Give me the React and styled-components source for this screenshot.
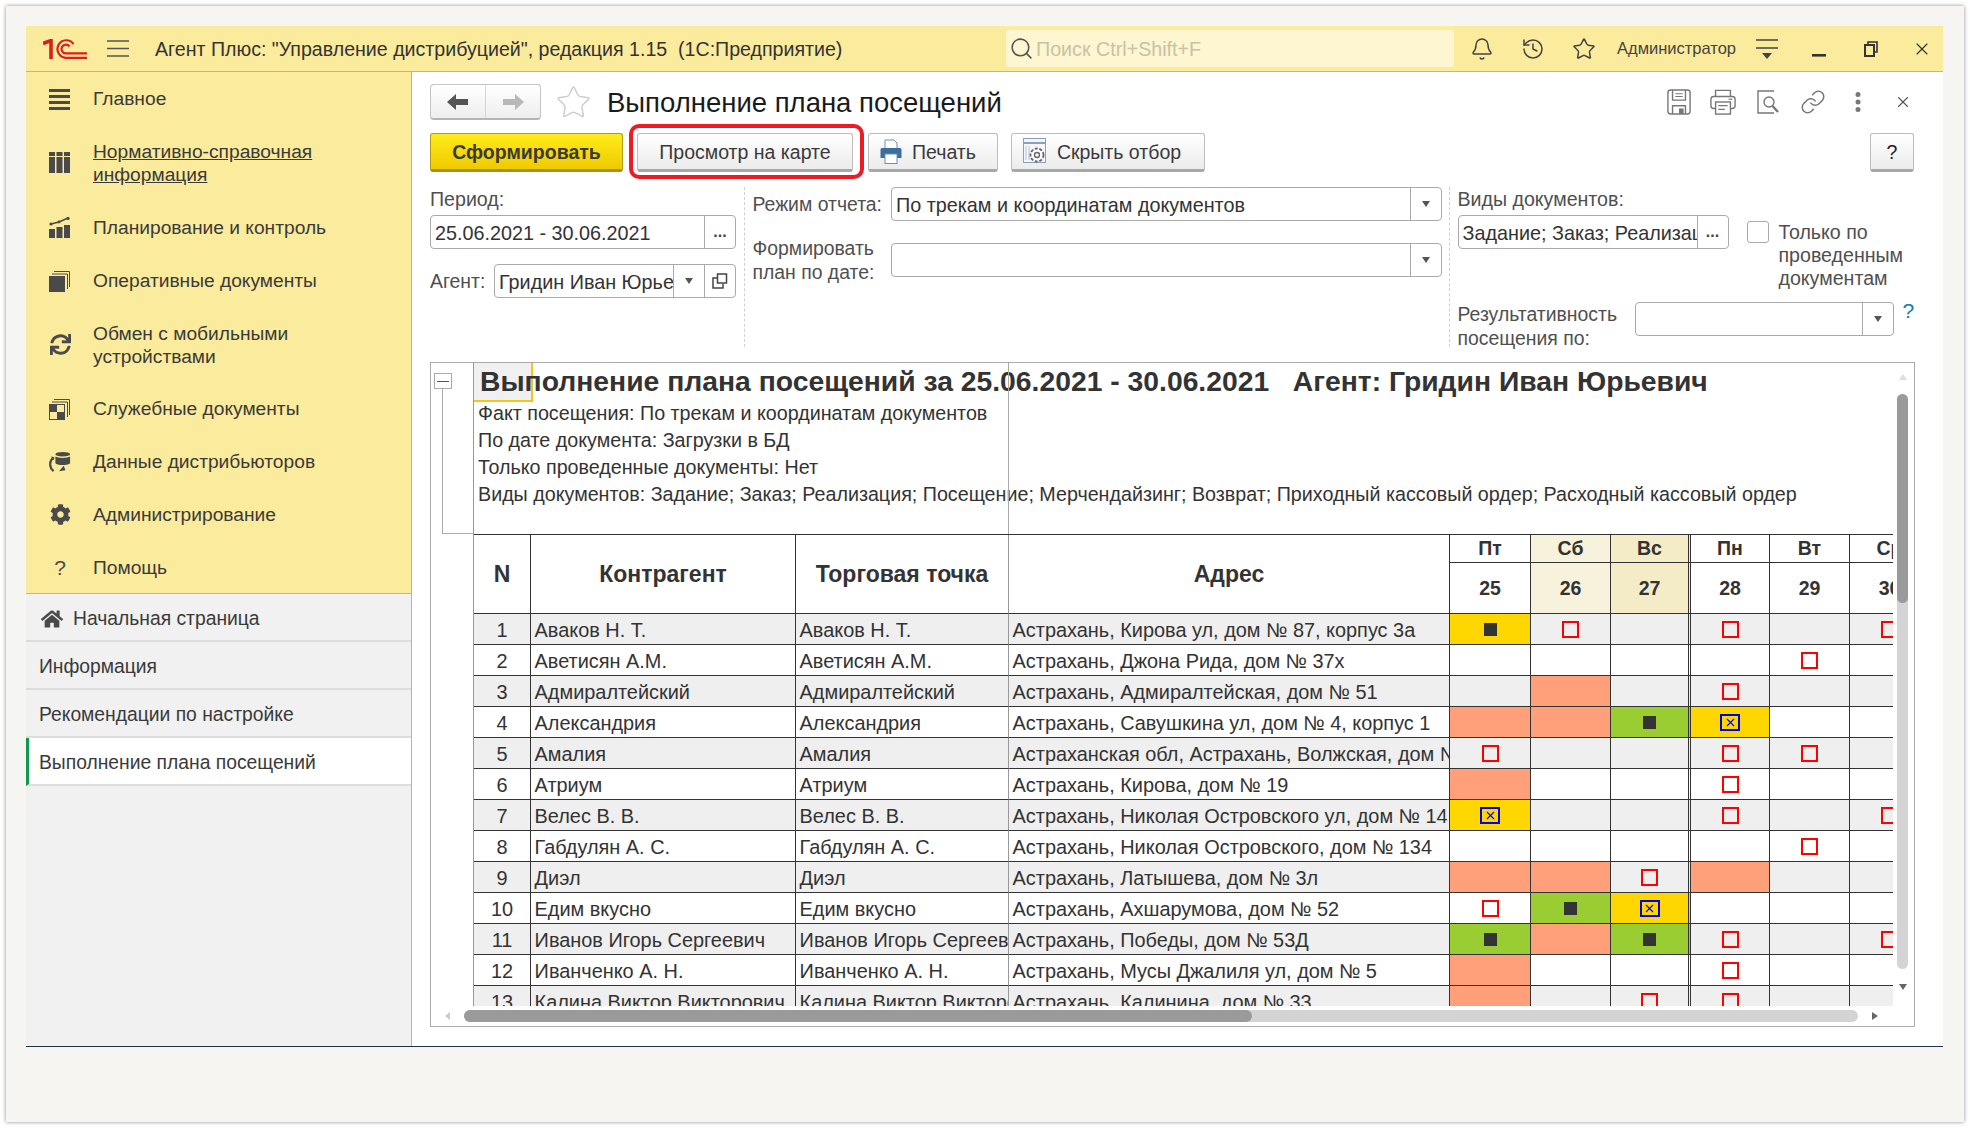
import React from 'react';
import styled, { createGlobalStyle } from 'styled-components';
import { Bell, History, Star, Search, Link, X } from 'lucide-react';
import { FaCog, FaSync, FaHome } from 'react-icons/fa';

const GlobalStyle = createGlobalStyle`
    html, body {
        margin: 0;
        padding: 0;
        background: #ffffff;
    }
    * {
        box-sizing: border-box;
    }
    body {
        font-family: "Liberation Sans", Arial, sans-serif;
        color: #333333;
    }
`;

const COLS = '57px 265px 213px 441px 81px 80px 80px 79px 80px 80px';

const Page = styled.div`
    width: 1970px;
    height: 1128px;
    padding: 6px;
    overflow: hidden;
`;

const Paper = styled.div`
    width: 1958px;
    height: 1116px;
    padding: 20px 21px 0 20px;
    background: #f6f5f2;
    box-shadow: 0 0 4px rgba(0, 0, 0, .45);
`;

const AppWindow = styled.div`
    height: 1021px;
    display: flex;
    flex-direction: column;
    border-bottom: 1px solid #1e3346;
    background: #ffffff;
`;

const Header = styled.header`
    height: 46px;
    flex: none;
    display: flex;
    align-items: center;
    background: #fbeb9c;
    border-bottom: 1px solid #c9b76a;
    padding: 0 11px 0 17px;
    > * {
        flex: none;
    }
`;

const LogoBox = styled.div`
    width: 44px;
    height: 20px;
    margin-right: 20px;
    display: flex;
`;

const MenuBox = styled.div`
    width: 22px;
    margin-right: 26px;
    display: flex;
`;

const AppTitle = styled.div`
    width: 851px;
    padding-top: 1px;
    font-size: 19.6px;
    color: #333;
    white-space: pre;
`;

const SearchBox = styled.div`
    width: 448px;
    height: 37px;
    display: flex;
    align-items: center;
    gap: 2px;
    padding-left: 3px;
    background: #fdf6d0;
    border-radius: 3px;
    color: #c8c3a6;
    font-size: 19.7px;
    line-height: 24px;
    svg {
        color: #555;
    }
`;

const HeaderIcons = styled.div`
    display: flex;
    align-items: center;
    margin-left: 16px;
    gap: 27px;
    svg {
        color: #444;
    }
`;

const UserName = styled.div`
    margin-left: 21px;
    font-size: 16.5px;
    color: #444;
    width: 139px;
    white-space: nowrap;
`;

const WindowIcons = styled.div`
    display: flex;
    align-items: center;
    gap: 34px;
    svg {
        display: block;
    }
`;

const Body = styled.div`
    flex: 1;
    display: flex;
    min-height: 0;
`;

const Sidebar = styled.nav`
    width: 386px;
    flex: none;
    display: flex;
    flex-direction: column;
    background: #f1f1f1;
    border-right: 1px solid #c9b76a;
`;

const Sections = styled.div`
    background: #fbeb9c;
    border-bottom: 1px solid #c9b76a;
    height: 522px;
    flex: none;
`;

const Section = styled.div`
    display: flex;
    align-items: center;
    height: ${p => p.$h}px;
    padding-left: 23px;
    color: #3a3a3a;
    font-size: 19.2px;
    line-height: 23px;
`;

const SectionIcon = styled.div`
    width: 22px;
    height: 22px;
    margin-right: 22px;
    flex: none;
    display: flex;
    align-items: center;
    justify-content: center;
    color: #4a4a4a;
    font-size: 21px;
`;

const SectionText = styled.span`
    text-decoration: ${p => (p.$underline ? 'underline' : 'none')};
`;

const Tab = styled.div`
    height: 48px;
    flex: none;
    display: flex;
    align-items: center;
    gap: 10px;
    padding: 3px 0 0 ${p => (p.$home ? 15 : p.$active ? 10 : 13)}px;
    border-bottom: 2px solid #dddddd;
    border-left: ${p => (p.$active ? '3px solid #0e9a4a' : '0 none')};
    background: ${p => (p.$active ? '#ffffff' : 'transparent')};
    font-size: 19.3px;
    color: #3a3a3a;
    svg {
        color: #4a4a4a;
    }
`;

const Content = styled.main`
    flex: 1;
    min-width: 0;
    padding: 12px 28px 0 18px;
    display: flex;
    flex-direction: column;
`;

const TitleBar = styled.div`
    height: 36px;
    flex: none;
    display: flex;
    align-items: center;
`;

const NavGroup = styled.div`
    width: 111px;
    height: 36px;
    display: flex;
    border: 1px solid #c4c4c4;
    border-bottom: 2px solid #b5b5b5;
    border-radius: 4px;
    background: linear-gradient(#ffffff, #eeeeee);
`;

const NavButton = styled.div`
    flex: 1;
    display: flex;
    align-items: center;
    justify-content: center;
    & + & {
        border-left: 1px solid #d4d4d4;
    }
`;

const FavStar = styled.div`
    margin: 0 15px 0 14px;
    display: flex;
    svg {
        color: #cfcfcf;
    }
`;

const PageTitle = styled.h1`
    margin: 0;
    padding-top: 2px;
    font-size: 27.5px;
    font-weight: 400;
    color: #1a1a1a;
    white-space: nowrap;
`;

const FormActions = styled.div`
    margin-left: auto;
    margin-right: -10px;
    display: flex;
    align-items: center;
    svg {
        color: #777777;
        display: block;
    }
`;

const FormAction = styled.div`
    width: 44.8px;
    display: flex;
    justify-content: center;
`;

const Toolbar = styled.div`
    margin-top: 13px;
    height: 39px;
    flex: none;
    display: flex;
    align-items: stretch;
`;

const Button = styled.div`
    width: ${p => p.$w}px;
    margin-left: ${p => p.$gap || 0}px;
    padding: 1px ${p => p.$padRight || 0}px 0 0;
    display: flex;
    align-items: center;
    justify-content: center;
    gap: 10px;
    font-size: 19.5px;
    color: #3a3a3a;
    border: 1px solid #bdbdbd;
    border-bottom: 3px solid #a8a8a8;
    border-radius: 3px;
    background: linear-gradient(#ffffff, #ececec);
`;

const PrimaryButton = styled(Button)`
    font-weight: 700;
    border: 1px solid #ad9a1c;
    border-bottom: 3px solid #a6921b;
    background: linear-gradient(#ffec1a, #efca00);
`;

const Highlighted = styled(Button)`
    position: relative;
    &::after {
        content: "";
        position: absolute;
        top: -10px;
        bottom: -10px;
        left: -9px;
        right: -12px;
        border: 4px solid #ed1c24;
        border-radius: 10px;
    }
`;

const HelpButton = styled(Button)`
    margin-left: auto;
    margin-right: 1px;
    color: #222;
`;

const FilterForm = styled.div`
    margin-top: 15px;
    height: 160px;
    flex: none;
    display: flex;
`;

const FilterColumn = styled.div`
    width: ${p => p.$w}px;
    flex: none;
    padding-right: ${p => p.$padRight || 0}px;
    ${p => (p.$dashed ? 'border-left: 1px dashed #d0d0d0; padding-left: 7.5px;' : '')}
    ${p => (p.$gapRight ? `margin-right: ${p.$gapRight}px;` : '')}
`;

const TopLabel = styled.div`
    height: 24px;
    line-height: 24px;
    margin-bottom: 4px;
    font-size: 19.6px;
    color: #4f4f4f;
`;

const Field = styled.div`
    height: 34px;
    width: ${p => (p.$w ? `${p.$w}px` : 'auto')};
    flex: ${p => (p.$w ? 'none' : '1')};
    min-width: 0;
    align-self: ${p => (p.$top ? 'flex-start' : 'auto')};
    display: flex;
    align-items: stretch;
    border: 1px solid #aaaaaa;
    border-radius: 4px;
    background: #fff;
`;

const FieldValue = styled.div`
    flex: 1;
    min-width: 0;
    padding-left: 4px;
    padding-right: 3px;
    font-size: 19.8px;
    line-height: 34px;
    color: #333;
    white-space: nowrap;
    overflow: hidden;
`;

const FieldButton = styled.div`
    width: 31px;
    flex: none;
    display: flex;
    align-items: center;
    justify-content: center;
    border-left: 1px solid #aaaaaa;
    color: #444;
    font-weight: 700;
    font-size: 16px;
`;

const Caret = styled.span`
    width: 0;
    height: 0;
    border-left: 4px solid transparent;
    border-right: 4px solid transparent;
    border-top: 6px solid #555;
`;

const InlineRow = styled.div`
    display: flex;
    align-items: center;
    margin-top: ${p => p.$top || 0}px;
    gap: ${p => p.$gap || 0}px;
    width: 100%;
`;

const SideLabel = styled.div`
    width: ${p => p.$w}px;
    flex: none;
    font-size: 19.4px;
    line-height: 24px;
    color: #4f4f4f;
`;

const DocsRow = styled.div`
    height: 115px;
    display: flex;
`;

const DocsField = styled.div`
    width: 271px;
    flex: none;
`;

const CheckOption = styled.div`
    margin: 34px 0 0 18px;
    display: flex;
    gap: 10px;
`;

const CheckBox = styled.div`
    width: 22px;
    height: 22px;
    flex: none;
    border: 1px solid #aaaaaa;
    border-radius: 3px;
    background: #fff;
`;

const CheckText = styled.div`
    font-size: 19.6px;
    line-height: 23px;
    color: #4f4f4f;
`;

const HelpMark = styled.div`
    align-self: flex-start;
    margin: -3px 0 0 9px;
    font-size: 21px;
    color: #1677b8;
`;

const Report = styled.section`
    margin-top: 15px;
    width: 1485px;
    height: 665px;
    flex: none;
    display: flex;
    flex-direction: column;
    border: 1px solid #aaaaaa;
`;

const ReportMain = styled.div`
    height: 643px;
    flex: none;
    display: flex;
`;

const Gutter = styled.div`
    width: 42px;
    flex: none;
    padding: 10px 0 0 3px;
`;

const Collapse = styled.div`
    width: 18px;
    height: 16px;
    border: 1px solid #aaaaaa;
    display: flex;
    align-items: center;
    justify-content: center;
    &::before {
        content: "";
        width: 12px;
        height: 1px;
        background: #555;
    }
`;

const TreeLine = styled.div`
    margin-left: 8px;
    width: 31px;
    height: 145px;
    border-left: 1px solid #aaaaaa;
    border-bottom: 1px solid #aaaaaa;
`;

const Sheet = styled.div`
    width: 1420px;
    flex: none;
    overflow: hidden;
    border-left: 1px solid #999999;
`;

const ReportHead = styled.div`
    height: 172px;
    position: relative;
    border-bottom: 1px solid #333;
    &::after {
        content: "";
        position: absolute;
        top: 0;
        bottom: 0;
        left: 534px;
        width: 1px;
        background: #aaaaaa;
    }
`;

const TitleCell = styled.div`
    width: 59px;
    height: 39px;
    margin-bottom: -2px;
    padding-left: 6px;
    background: #f0f0f0;
    border-right: 2px solid #f5c518;
    border-bottom: 2px solid #f5c518;
    font-size: 28.3px;
    line-height: 37px;
    font-weight: 700;
    color: #333;
    white-space: pre;
`;

const ParamLine = styled.div`
    height: 27px;
    line-height: 27px;
    padding-left: 4px;
    font-size: 19.7px;
    color: #333;
    white-space: nowrap;
`;

const Grid = styled.div`
    width: 1456px;
    display: grid;
    grid-template-columns: ${COLS};
`;

const GridHead = styled(Grid)`
    grid-template-rows: 28px 51px;
`;

const HeadCell = styled.div`
    ${p => (p.$span ? 'grid-row: span 2;' : '')}
    display: flex;
    align-items: center;
    justify-content: center;
    border-right: ${p => (p.$double ? '3px double #333' : p.$light ? '1px solid #999' : '1px solid #333')};
    border-bottom: 1px solid #333;
    background: ${p => p.$bg || '#ffffff'};
    font-weight: 700;
    font-size: ${p => (p.$day ? 19.5 : 23)}px;
    color: #333;
`;

const Row = styled(Grid)`
    height: 31px;
    background: ${p => (p.$shaded ? '#efefef' : '#ffffff')};
`;

const TextCell = styled.div`
    padding-left: ${p => (p.$center ? 0 : 3.6)}px;
    text-align: ${p => (p.$center ? 'center' : 'left')};
    border-right: 1px solid ${p => (p.$light ? '#999' : '#333')};
    border-bottom: 1px solid #333;
    font-size: 19.9px;
    line-height: 32px;
    color: #333;
    white-space: nowrap;
    overflow: hidden;
`;

const DayCell = styled.div`
    display: flex;
    align-items: center;
    justify-content: center;
    border-right: ${p => (p.$double ? '3px double #333' : '1px solid #333')};
    border-bottom: 1px solid #333;
    background: ${p => p.$bg || 'transparent'};
`;

const DoneMark = styled.span`
    width: 13px;
    height: 13px;
    background: #333;
`;

const PlanMark = styled.span`
    width: 17px;
    height: 17px;
    border: 2px solid #ff0000;
`;

const MissMark = styled.span`
    width: 20px;
    height: 17px;
    display: flex;
    align-items: center;
    justify-content: center;
    border: 2px solid #0000ff;
    color: #0000ff;
`;

const VScroll = styled.div`
    width: 21px;
    flex: none;
    padding-right: 2px;
    display: flex;
    flex-direction: column;
    align-items: center;
`;

const ScrollArrow = styled.div`
    width: 0;
    height: 0;
    ${p => p.$dir === 'up' && 'border-left: 4px solid transparent; border-right: 4px solid transparent; border-bottom: 6px solid #dddddd; margin-top: 11px;'}
    ${p => p.$dir === 'down' && 'border-left: 4px solid transparent; border-right: 4px solid transparent; border-top: 6px solid #666; margin-top: 15px;'}
    ${p => p.$dir === 'left' && 'border-top: 4px solid transparent; border-bottom: 4px solid transparent; border-right: 5px solid #cccccc; margin-left: 14px;'}
    ${p => p.$dir === 'right' && 'border-top: 4px solid transparent; border-bottom: 4px solid transparent; border-left: 6px solid #666; margin-left: 14px;'}
`;

const VTrack = styled.div`
    margin-top: 14px;
    width: 11px;
    height: 575px;
    border-radius: 6px;
    background: #d4d4d4;
`;

const VThumb = styled.div`
    height: 209px;
    border-radius: 6px;
    background: #9a9a9a;
`;

const HScroll = styled.div`
    height: 20px;
    flex: none;
    display: flex;
    align-items: center;
`;

const HTrack = styled.div`
    margin-left: 14px;
    width: 1394px;
    height: 12px;
    border-radius: 6px;
    background: #d4d4d4;
`;

const HThumb = styled.div`
    width: 788px;
    height: 12px;
    border-radius: 6px;
    background: #9a9a9a;
`;

function BarsIcon() {
    return (
        <svg width="22" height="22" viewBox="0 0 22 22" fill="currentColor">
            <rect x="0" y="1" width="21" height="3" />
            <rect x="0" y="7" width="21" height="3" />
            <rect x="0" y="13" width="21" height="3" />
            <rect x="0" y="19" width="21" height="3" />
        </svg>
    );
}

function ColumnsIcon() {
    return (
        <svg width="22" height="22" viewBox="0 0 22 22" fill="currentColor">
            <rect x="0" y="0" width="6" height="4" />
            <rect x="7.5" y="0" width="6" height="4" />
            <rect x="15" y="0" width="6" height="4" />
            <rect x="0" y="5" width="6" height="16" />
            <rect x="7.5" y="5" width="6" height="16" />
            <rect x="15" y="5" width="6" height="16" />
        </svg>
    );
}

function ChartIcon() {
    return (
        <svg width="22" height="22" viewBox="0 0 22 22" fill="currentColor">
            <rect x="0" y="12" width="6" height="9" />
            <rect x="7.5" y="10" width="6" height="11" />
            <rect x="15" y="8" width="6" height="13" />
            <path d="M2 7 L10 5 L19 1" fill="none" stroke="currentColor" strokeWidth="1.4" />
            <circle cx="2" cy="7" r="1.6" />
            <circle cx="10" cy="5" r="1.4" />
            <circle cx="19" cy="1.5" r="1.6" />
        </svg>
    );
}

function DocsIcon({ checker }) {
    return (
        <svg width="22" height="22" viewBox="0 0 22 22" fill="currentColor">
            <path d="M5 1.5 H20.5 V17" fill="none" stroke="currentColor" strokeWidth="1" />
            <path d="M3 4 H18.5 V19" fill="none" stroke="currentColor" strokeWidth="1" />
            <rect x="0" y="6" width="16" height="16" />
            {checker && <rect x="8" y="7" width="7" height="7" fill="#fbeb9c" />}
            {checker && <rect x="1" y="14" width="7" height="7" fill="#fbeb9c" />}
        </svg>
    );
}

function BarrelIcon() {
    return (
        <svg width="24" height="24" viewBox="0 0 24 24" fill="currentColor">
            <ellipse cx="15" cy="3.5" rx="8" ry="2.5" />
            <path d="M7 6 C10 8 20 8 23 6 V13 C22 16 8 16 7 13 Z" />
            <path d="M5 7 C0 11 0 18 5 22" fill="none" stroke="currentColor" strokeWidth="2.4" />
            <path d="M6 7 L2 6 L5 10 Z" />
            <path d="M11 22 L16 16 L18 21 Z" />
        </svg>
    );
}

function Logo() {
    return (
        <svg width="44" height="20" viewBox="0 0 44 20" fill="none" stroke="#d9201f" strokeWidth="2.2">
            <path d="M0 4.5 L8 1.5 V20" strokeWidth="3.6" />
            <path d="M30.5 5 A8.8 8.8 0 1 0 22.5 18.8 H44" />
            <path d="M26.5 7.5 A4.4 4.4 0 1 0 22.5 14.4 H44" />
        </svg>
    );
}

function Hamburger() {
    return (
        <svg width="22" height="18" viewBox="0 0 22 18" stroke="#555" strokeWidth="1.6">
            <path d="M0 1 H22 M0 8.5 H22 M0 16 H22" />
        </svg>
    );
}

function UserMenuIcon() {
    return (
        <svg width="22" height="22" viewBox="0 0 22 22">
            <path d="M0 2 H22 M0 10 H22" stroke="#444" strokeWidth="1.6" />
            <path d="M6 15 H16 L11 21 Z" fill="#444" />
        </svg>
    );
}

function MinimizeIcon() {
    return (
        <svg width="18" height="16" viewBox="0 0 18 16">
            <rect x="0" y="13" width="14" height="2.6" fill="#333" />
        </svg>
    );
}

function RestoreIcon() {
    return (
        <svg width="14" height="16" viewBox="0 0 14 16" fill="none" stroke="#333">
            <path d="M4 3 V1 H13 V11 H11" strokeWidth="1.6" />
            <rect x="1" y="4" width="9" height="11" strokeWidth="2" />
        </svg>
    );
}

function ArrowIcon({ flip, color }) {
    return (
        <svg width="22" height="16" viewBox="0 0 22 16">
            <path d="M0 8 L9 0 V5 H21 V11 H9 V16 Z" fill={color} transform={flip ? 'matrix(-1 0 0 1 22 0)' : undefined} />
        </svg>
    );
}

function SaveIcon() {
    return (
        <svg width="24" height="26" viewBox="0 0 26 28" fill="none" stroke="currentColor" strokeWidth="1.5">
            <rect x="1" y="1" width="24" height="26" rx="3" />
            <path d="M6 1 V12 H20 V1" />
            <path d="M9 5 H17 M9 8 H17" strokeWidth="1.2" />
            <path d="M6 27 V18 H20 V27" />
            <rect x="13" y="21" width="5" height="6" fill="currentColor" stroke="none" />
        </svg>
    );
}

function PrinterIcon() {
    return (
        <svg width="26" height="26" viewBox="0 0 28 28" fill="none" stroke="currentColor" strokeWidth="1.5">
            <path d="M6 8 V1.5 H22 V8" />
            <rect x="1" y="8" width="26" height="13" rx="3" />
            <rect x="6" y="14" width="16" height="13" fill="#fff" />
            <path d="M9 18 H19 M9 22 H16" strokeWidth="1.3" />
            <path d="M20 11 H24" strokeWidth="1.3" />
        </svg>
    );
}

function PreviewIcon() {
    return (
        <svg width="22" height="28" viewBox="0 0 22 28" fill="none" stroke="currentColor" strokeWidth="1.4">
            <path d="M17 3 H1 V25 H17" />
            <circle cx="12" cy="14" r="5" />
            <path d="M15.5 18 L21 24" strokeWidth="2.4" />
        </svg>
    );
}

function DotsIcon() {
    return (
        <svg width="8" height="22" viewBox="0 0 8 22" fill="currentColor">
            <circle cx="4" cy="3.5" r="2.5" />
            <circle cx="4" cy="11" r="2.5" />
            <circle cx="4" cy="18.5" r="2.5" />
        </svg>
    );
}

function OpenIcon() {
    return (
        <svg width="16" height="16" viewBox="0 0 16 16" fill="none" stroke="#444" strokeWidth="1.5">
            <rect x="5.5" y="1" width="9" height="9" />
            <path d="M5 5 H1 V15 H11 V11" />
        </svg>
    );
}

function PrintButtonIcon() {
    return (
        <svg width="22" height="26" viewBox="0 0 22 26">
            <path d="M5 1 H14 L17 4 V10 H5 Z" fill="#fff" stroke="#6f8fb0" />
            <path d="M2 9 H20 A1.5 1.5 0 0 1 21.5 10.5 V19 H0.5 V10.5 A1.5 1.5 0 0 1 2 9 Z" fill="#3d6d9c" />
            <rect x="5" y="15" width="12" height="9.5" fill="#fff" stroke="#6f8fb0" />
        </svg>
    );
}

function FilterIcon() {
    return (
        <svg width="24" height="28" viewBox="0 0 24 28" fill="none">
            <rect x="0.5" y="0.5" width="22" height="24" fill="#f4f6fa" stroke="#8ba0bd" />
            <path d="M0.5 5 H22.5" stroke="#8ba0bd" strokeWidth="2" />
            <path d="M3 8 V22 M6 8 V22" stroke="#b6c4d8" />
            <circle cx="14" cy="17" r="6.5" fill="#fff" stroke="#666" strokeWidth="1.8" strokeDasharray="3 1.6" />
            <circle cx="14" cy="17" r="2.5" stroke="#666" strokeWidth="1.4" />
        </svg>
    );
}

const sections = [
    { key: 'main', h: 53, text: 'Главное', icon: <BarsIcon /> },
    { key: 'nsi', h: 76, text: <>Нормативно-справочная<br />информация</>, icon: <ColumnsIcon />, underline: true },
    { key: 'plan', h: 53, text: 'Планирование и контроль', icon: <ChartIcon /> },
    { key: 'oper', h: 53, text: 'Оперативные документы', icon: <DocsIcon /> },
    { key: 'sync', h: 75, text: <>Обмен с мобильными<br />устройствами</>, icon: <FaSync size={21} /> },
    { key: 'serv', h: 53, text: 'Служебные документы', icon: <DocsIcon checker /> },
    { key: 'dist', h: 53, text: 'Данные дистрибьюторов', icon: <BarrelIcon /> },
    { key: 'admin', h: 53, text: 'Администрирование', icon: <FaCog size={21} /> },
    { key: 'help', h: 53, text: 'Помощь', icon: '?' },
];

const days = [
    { name: 'Пт', num: 25 },
    { name: 'Сб', num: 26, bg: '#f7f2db' },
    { name: 'Вс', num: 27, bg: '#f3ecc6', double: true },
    { name: 'Пн', num: 28 },
    { name: 'Вт', num: 29 },
    { name: 'Ср', num: 30 },
];

const FILL = { o: '#ffa07a', y: '#ffd700', g: '#9acd32' };

// по дням: o - оранжевый, r - план, Y - желтый с фактом, X - желтый с крестом, G - зеленый с фактом
const rows = [
    ['Аваков Н. Т.', 'Астрахань, Кирова ул, дом № 87, корпус 3а', 'Yr.r.r'],
    ['Аветисян А.М.', 'Астрахань, Джона Рида, дом № 37х', '....r.'],
    ['Адмиралтейский', 'Астрахань, Адмиралтейская, дом № 51', '.o.r..'],
    ['Александрия', 'Астрахань, Савушкина ул, дом № 4, корпус 1', 'ooGX..'],
    ['Амалия', 'Астраханская обл, Астрахань, Волжская, дом № 12', 'r..rr.'],
    ['Атриум', 'Астрахань, Кирова, дом № 19', 'o..r..'],
    ['Велес В. В.', 'Астрахань, Николая Островского ул, дом № 14', 'X..r.r'],
    ['Габдулян А. С.', 'Астрахань, Николая Островского, дом № 134', '....r.'],
    ['Диэл', 'Астрахань, Латышева, дом № 3л', 'ooro..'],
    ['Едим вкусно', 'Астрахань, Ахшарумова, дом № 52', 'rGX...'],
    ['Иванов Игорь Сергеевич', 'Астрахань, Победы, дом № 53Д', 'GoGr.r'],
    ['Иванченко А. Н.', 'Астрахань, Мусы Джалиля ул, дом № 5', 'o..r..'],
    ['Калина Виктор Викторович', 'Астрахань, Калинина, дом № 33', 'o.rr..'],
];

function DayMark({ code }) {
    if (code === 'r') return <PlanMark />;
    if (code === 'Y' || code === 'G') return <DoneMark />;
    if (code === 'X') return <MissMark><X size={13} strokeWidth={2} /></MissMark>;
    return null;
}

function dayFill(code) {
    if (code === 'o') return FILL.o;
    if (code === 'Y' || code === 'X') return FILL.y;
    if (code === 'G') return FILL.g;
    return undefined;
}

function App() {
    return (
        <Page>
            <GlobalStyle />
            <Paper>
                <AppWindow>
                    <Header>
                        <LogoBox><Logo /></LogoBox>
                        <MenuBox><Hamburger /></MenuBox>
                        <AppTitle>Агент Плюс: "Управление дистрибуцией", редакция 1.15  (1С:Предприятие)</AppTitle>
                        <SearchBox>
                            <Search size={25} strokeWidth={1.5} />
                            Поиск Ctrl+Shift+F
                        </SearchBox>
                        <HeaderIcons>
                            <Bell size={24} strokeWidth={1.5} />
                            <History size={24} strokeWidth={1.5} />
                            <Star size={24} strokeWidth={1.5} />
                        </HeaderIcons>
                        <UserName>Администратор</UserName>
                        <WindowIcons>
                            <UserMenuIcon />
                            <MinimizeIcon />
                            <RestoreIcon />
                            <X size={20} strokeWidth={1.4} color="#333" />
                        </WindowIcons>
                    </Header>
                    <Body>
                        <Sidebar>
                            <Sections>
                                {sections.map(s => (
                                    <Section key={s.key} $h={s.h}>
                                        <SectionIcon>{s.icon}</SectionIcon>
                                        <SectionText $underline={s.underline}>{s.text}</SectionText>
                                    </Section>
                                ))}
                            </Sections>
                            <Tab $home><FaHome size={22} />Начальная страница</Tab>
                            <Tab>Информация</Tab>
                            <Tab>Рекомендации по настройке</Tab>
                            <Tab $active>Выполнение плана посещений</Tab>
                        </Sidebar>
                        <Content>
                            <TitleBar>
                                <NavGroup>
                                    <NavButton><ArrowIcon color="#555" /></NavButton>
                                    <NavButton><ArrowIcon flip color="#b8b8b8" /></NavButton>
                                </NavGroup>
                                <FavStar><Star size={37} strokeWidth={1} /></FavStar>
                                <PageTitle>Выполнение плана посещений</PageTitle>
                                <FormActions>
                                    <FormAction><SaveIcon /></FormAction>
                                    <FormAction><PrinterIcon /></FormAction>
                                    <FormAction><PreviewIcon /></FormAction>
                                    <FormAction><Link size={26} strokeWidth={1.4} /></FormAction>
                                    <FormAction><DotsIcon /></FormAction>
                                    <FormAction><X size={18} strokeWidth={1.5} color="#555" /></FormAction>
                                </FormActions>
                            </TitleBar>
                            <Toolbar>
                                <PrimaryButton $w={193}>Сформировать</PrimaryButton>
                                <Highlighted $w={216} $gap={14}>Просмотр на карте</Highlighted>
                                <Button $w={130} $gap={15} $padRight={10}><PrintButtonIcon />Печать</Button>
                                <Button $w={194} $gap={13} $padRight={12}><FilterIcon />Скрыть отбор</Button>
                                <HelpButton $w={44}>?</HelpButton>
                            </Toolbar>
                            <FilterForm>
                                <FilterColumn $w={306} $gapRight={8}>
                                    <TopLabel>Период:</TopLabel>
                                    <Field>
                                        <FieldValue>25.06.2021 - 30.06.2021</FieldValue>
                                        <FieldButton>...</FieldButton>
                                    </Field>
                                    <InlineRow $top={15} $gap={8}>
                                        <SideLabel $w={56}>Агент:</SideLabel>
                                        <Field>
                                            <FieldValue>Гридин Иван Юрьевич</FieldValue>
                                            <FieldButton><Caret /></FieldButton>
                                            <FieldButton><OpenIcon /></FieldButton>
                                        </Field>
                                    </InlineRow>
                                </FilterColumn>
                                <FilterColumn $w={705} $dashed $padRight={7}>
                                    <InlineRow>
                                        <SideLabel $w={138.5}>Режим отчета:</SideLabel>
                                        <Field>
                                            <FieldValue>По трекам и координатам документов</FieldValue>
                                            <FieldButton><Caret /></FieldButton>
                                        </Field>
                                    </InlineRow>
                                    <InlineRow $top={15}>
                                        <SideLabel $w={138.5}>Формировать<br />план по дате:</SideLabel>
                                        <Field>
                                            <FieldValue />
                                            <FieldButton><Caret /></FieldButton>
                                        </Field>
                                    </InlineRow>
                                </FilterColumn>
                                <FilterColumn $w={466} $dashed>
                                    <DocsRow>
                                        <DocsField>
                                            <TopLabel>Виды документов:</TopLabel>
                                            <Field>
                                                <FieldValue>Задание; Заказ; Реализация; Посещение</FieldValue>
                                                <FieldButton>...</FieldButton>
                                            </Field>
                                        </DocsField>
                                        <CheckOption>
                                            <CheckBox />
                                            <CheckText>Только по<br />проведенным<br />документам</CheckText>
                                        </CheckOption>
                                    </DocsRow>
                                    <InlineRow>
                                        <SideLabel $w={177}>Результативность<br />посещения по:</SideLabel>
                                        <Field $w={259} $top>
                                            <FieldValue />
                                            <FieldButton><Caret /></FieldButton>
                                        </Field>
                                        <HelpMark>?</HelpMark>
                                    </InlineRow>
                                </FilterColumn>
                            </FilterForm>
                            <Report>
                                <ReportMain>
                                    <Gutter>
                                        <Collapse />
                                        <TreeLine />
                                    </Gutter>
                                    <Sheet>
                                        <ReportHead>
                                            <TitleCell>Выполнение плана посещений за 25.06.2021 - 30.06.2021   Агент: Гридин Иван Юрьевич</TitleCell>
                                            <ParamLine>Факт посещения: По трекам и координатам документов</ParamLine>
                                            <ParamLine>По дате документа: Загрузки в БД</ParamLine>
                                            <ParamLine>Только проведенные документы: Нет</ParamLine>
                                            <ParamLine>Виды документов: Задание; Заказ; Реализация; Посещение; Мерчендайзинг; Возврат; Приходный кассовый ордер; Расходный кассовый ордер</ParamLine>
                                        </ReportHead>
                                        <GridHead>
                                            <HeadCell $span>N</HeadCell>
                                            <HeadCell $span>Контрагент</HeadCell>
                                            <HeadCell $span $light>Торговая точка</HeadCell>
                                            <HeadCell $span>Адрес</HeadCell>
                                            {days.map(d => (
                                                <HeadCell key={d.name} $day $bg={d.bg} $double={d.double}>{d.name}</HeadCell>
                                            ))}
                                            {days.map(d => (
                                                <HeadCell key={d.num} $day $bg={d.bg} $double={d.double}>{d.num}</HeadCell>
                                            ))}
                                        </GridHead>
                                        {rows.map(([name, address, marks], i) => (
                                            <Row key={name} $shaded={i % 2 === 0}>
                                                <TextCell $center>{i + 1}</TextCell>
                                                <TextCell>{name}</TextCell>
                                                <TextCell $light>{name}</TextCell>
                                                <TextCell>{address}</TextCell>
                                                {days.map((d, j) => (
                                                    <DayCell key={d.num} $bg={dayFill(marks[j])} $double={d.double}>
                                                        <DayMark code={marks[j]} />
                                                    </DayCell>
                                                ))}
                                            </Row>
                                        ))}
                                    </Sheet>
                                    <VScroll>
                                        <ScrollArrow $dir="up" />
                                        <VTrack><VThumb /></VTrack>
                                        <ScrollArrow $dir="down" />
                                    </VScroll>
                                </ReportMain>
                                <HScroll>
                                    <ScrollArrow $dir="left" />
                                    <HTrack><HThumb /></HTrack>
                                    <ScrollArrow $dir="right" />
                                </HScroll>
                            </Report>
                        </Content>
                    </Body>
                </AppWindow>
            </Paper>
        </Page>
    );
}

export default App;
